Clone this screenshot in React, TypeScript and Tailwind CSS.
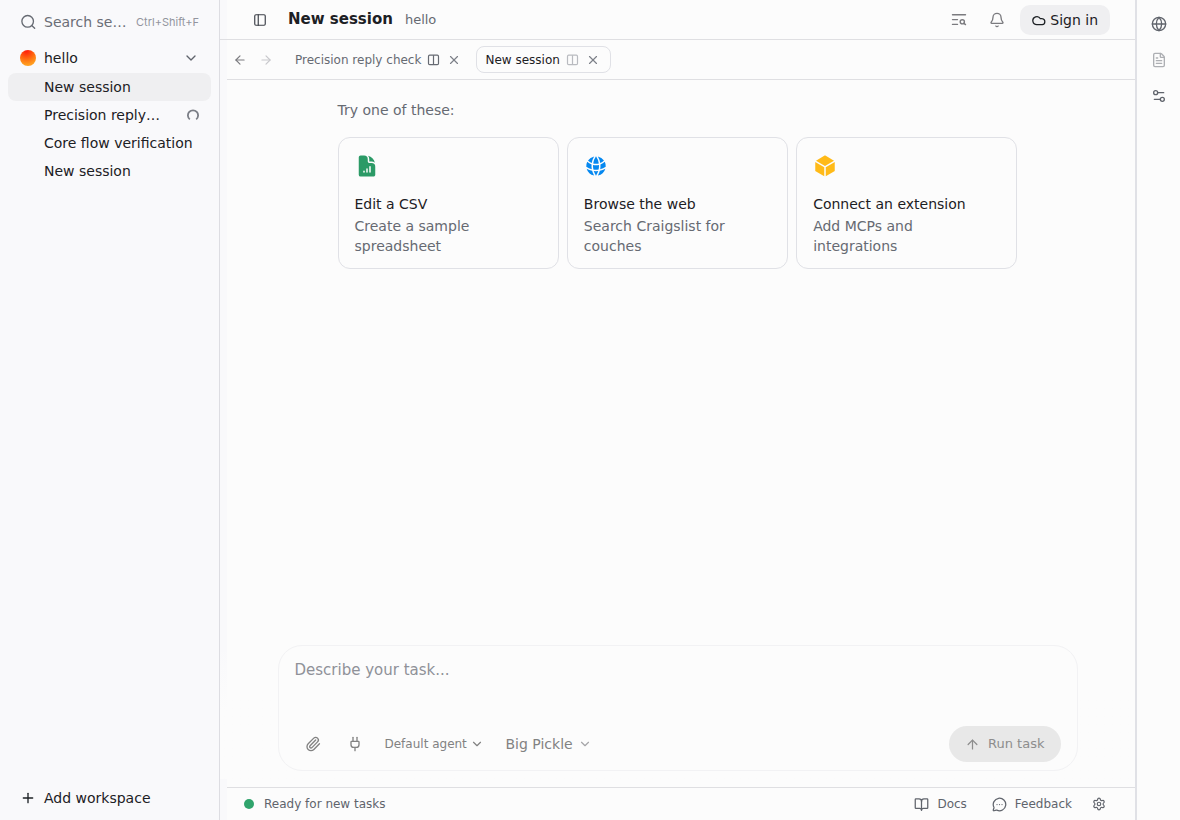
import React from 'react';
import {
  ArrowLeft,
  ArrowRight,
  ArrowUp,
  Bell,
  BookOpen,
  ChevronDown,
  FileText,
  Globe,
  MessageCircleMore,
  PanelLeft,
  Paperclip,
  Plug,
  Plus,
  Settings,
  Settings2,
  X,
} from 'lucide-react';
import { HiCube, HiDocumentChartBar, HiGlobeAlt } from 'react-icons/hi2';

interface Session {
  id: number;
  title: string;
  isActive?: boolean;
  isRunning?: boolean;
}

const sessions: Session[] = [
  { id: 1, title: 'New session', isActive: true },
  { id: 2, title: 'Precision reply check', isRunning: true },
  { id: 3, title: 'Core flow verification' },
  { id: 4, title: 'New session' },
];

const suggestions = [
  {
    title: 'Edit a CSV',
    description: 'Create a sample spreadsheet',
    icon: <HiDocumentChartBar size={24} className="text-[#2b9a66]" />,
  },
  {
    title: 'Browse the web',
    description: 'Search Craigslist for couches',
    icon: <HiGlobeAlt size={24} className="text-[#0588f0]" />,
  },
  {
    title: 'Connect an extension',
    description: 'Add MCPs and integrations',
    icon: <HiCube size={24} className="text-[#ffba18]" />,
  },
];

const SearchIcon: React.FC = () => (
  <svg
    viewBox="0 0 24 24"
    fill="none"
    stroke="currentColor"
    strokeWidth="2"
    strokeLinecap="round"
    className="size-4 shrink-0"
  >
    <circle cx="11.5" cy="11" r="8.7" />
    <path d="m18 17.5 4 4" />
  </svg>
);

const TextSearchIcon: React.FC = () => (
  <svg
    viewBox="0 0 16 16"
    fill="none"
    stroke="currentColor"
    strokeWidth="1.4"
    strokeLinecap="round"
    className="size-4"
  >
    <path d="M1.5 2.8h13M1.5 7.6h5M1.5 12.4h5" />
    <circle cx="11.3" cy="9.8" r="2.1" />
    <path d="m13 11.4 1.5 1.2" />
  </svg>
);

const CloudIcon: React.FC = () => (
  <svg
    viewBox="0 0 24 24"
    fill="none"
    stroke="currentColor"
    strokeWidth="2.2"
    strokeLinejoin="round"
    className="size-3.5"
  >
    <path d="M17.5 20H8.5a6.9 6.9 0 1 1 5.9-10.2c.9-.3 2-.3 3.1-.1a5.2 5.2 0 0 1 0 10.3Z" />
  </svg>
);

const SplitIcon: React.FC = () => (
  <svg
    viewBox="0 0 14 14"
    fill="none"
    stroke="currentColor"
    strokeWidth="1.2"
    className="size-3.5"
  >
    <rect x="2.5" y="2.2" width="10" height="9.4" rx="1.2" />
    <path d="M7.5 2.2v9.4" />
  </svg>
);

const Spinner: React.FC = () => (
  <svg
    viewBox="0 0 12 12"
    fill="none"
    stroke="currentColor"
    strokeWidth="1.8"
    className="size-3 shrink-0 text-[#7b7e86]"
  >
    <path d="M2.8 10.4a5.1 5.1 0 1 1 6.4 0" />
  </svg>
);

const Sidebar: React.FC = () => (
  <aside className="flex w-[220px] shrink-0 flex-col border-r border-[#dddde2] bg-[#f9f9fb] px-2 pt-2">
    <label className="flex h-7 items-center gap-2 px-3 text-[#666a72]">
      <SearchIcon />
      <input
        type="text"
        aria-label="Search sessions"
        placeholder="Search sessions"
        className="min-w-0 flex-1 bg-transparent text-sm text-ellipsis outline-none placeholder:text-[#6b6e76]"
      />
      <kbd className="font-[Inter,sans-serif] text-[11px] text-[#93959e]">
        Ctrl+Shift+F
      </kbd>
    </label>
    <button
      type="button"
      className="mt-2 flex h-7 items-center gap-2 px-3 text-sm"
    >
      <span className="size-4 rounded-full bg-[radial-gradient(circle_at_40%_5%,#ff1a0a,#ff6a10_45%,#ff9a1e_75%,#ffac2e)]" />
      <span className="flex-1 text-left">hello</span>
      <ChevronDown size={16} className="text-[#60646c]" />
    </button>
    <nav className="mt-px flex flex-col">
      {sessions.map(session => (
        <button
          key={session.id}
          type="button"
          className={
            session.isActive
              ? 'flex h-7 items-center gap-6 rounded-lg bg-[#efeff1] pr-3 pl-9 text-left text-sm'
              : 'flex h-7 items-center gap-6 rounded-lg pr-3 pl-9 text-left text-sm'
          }
        >
          <span className="min-w-0 flex-1 truncate">{session.title}</span>
          {session.isRunning && <Spinner />}
        </button>
      ))}
    </nav>
    <button
      type="button"
      className="mt-auto mb-2 flex h-7 items-center gap-2 px-3 text-sm"
    >
      <Plus size={16} />
      Add workspace
    </button>
  </aside>
);

const Header: React.FC = () => (
  <header className="relative z-10 flex h-10 shrink-0 items-center border-b border-[#dfdfe2] pr-[25px] pl-6">
    <button
      type="button"
      aria-label="Toggle sidebar"
      className="flex size-8 items-center justify-center text-[#3c4048]"
    >
      <PanelLeft size={14} />
    </button>
    <h1 className="ml-3 text-[15px] font-bold">New session</h1>
    <span className="ml-3 text-[13px] text-[#666a72]">hello</span>
    <div className="ml-auto flex items-center gap-2">
      <button
        type="button"
        aria-label="Search in session"
        className="flex size-[30px] items-center justify-center text-[#7b7b7f]"
      >
        <TextSearchIcon />
      </button>
      <button
        type="button"
        aria-label="Notifications"
        className="flex size-[30px] items-center justify-center text-[#7b7b7f]"
      >
        <Bell size={16} />
      </button>
      <button
        type="button"
        className="flex h-[30px] items-center gap-1 rounded-[10px] bg-[#efeff1] px-3 text-sm"
      >
        <CloudIcon />
        Sign in
      </button>
    </div>
  </header>
);

const TabBar: React.FC = () => (
  <div className="flex h-10 shrink-0 items-center border-b border-[#dfdfe2] pl-2 text-xs">
    <button
      type="button"
      aria-label="Back"
      className="flex size-6 items-center justify-center text-[#7b7b7f]"
    >
      <ArrowLeft size={14} />
    </button>
    <button
      type="button"
      aria-label="Forward"
      disabled
      className="ml-0.5 flex size-6 items-center justify-center text-[#c8c8cc]"
    >
      <ArrowRight size={14} />
    </button>
    <div className="ml-2 flex h-[27px] items-center gap-1 border border-transparent px-2 text-[#666a72]">
      <button type="button">Precision reply check</button>
      <button
        type="button"
        aria-label="Split Precision reply check"
        className="flex size-4 items-center justify-center"
      >
        <SplitIcon />
      </button>
      <button
        type="button"
        aria-label="Close Precision reply check"
        className="flex size-[18px] items-center justify-center text-[#7d8088]"
      >
        <X size={14} />
      </button>
    </div>
    <div className="ml-1 flex h-[27px] items-center gap-1 rounded-lg border border-[#e0e1e6] px-2">
      <button type="button">New session</button>
      <button
        type="button"
        aria-label="Split New session"
        className="flex size-4 items-center justify-center text-[#b9bbc0]"
      >
        <SplitIcon />
      </button>
      <button
        type="button"
        aria-label="Close New session"
        className="flex size-[18px] items-center justify-center text-[#7d8088]"
      >
        <X size={14} />
      </button>
    </div>
  </div>
);

const Suggestions: React.FC = () => (
  <section className="mx-auto w-full max-w-[680px] pt-5 text-sm">
    <p className="text-[#666a72]">Try one of these:</p>
    <div className="mt-[17px] grid grid-cols-3 gap-2">
      {suggestions.map(suggestion => (
        <button
          key={suggestion.title}
          type="button"
          className="flex flex-col items-start rounded-xl border border-[#e0e1e6] px-4 pt-4 pb-3 text-left"
        >
          {suggestion.icon}
          <span className="mt-4">{suggestion.title}</span>
          <span className="mt-0.5 text-[#666a72]">
            {suggestion.description}
          </span>
        </button>
      ))}
    </div>
  </section>
);

const Composer: React.FC = () => (
  <div className="relative z-10 mb-2 bg-linear-to-b from-transparent to-[#fcfcfc] to-50% px-4 pb-2">
    <form className="mx-auto flex w-full max-w-[800px] flex-col rounded-3xl border border-[#f2f2f4] bg-[#fcfcfc] px-4 pb-2">
      <textarea
        aria-label="Describe your task"
        placeholder="Describe your task..."
        className="h-20 resize-none bg-transparent pt-3 text-[15px] leading-6 outline-none placeholder:text-[#8f9198]"
      />
      <div className="flex items-center text-[#828282]">
        <button
          type="button"
          aria-label="Attach file"
          className="flex size-9 items-center justify-center"
        >
          <Paperclip size={16} />
        </button>
        <button
          type="button"
          aria-label="Connect tools"
          className="ml-1.5 flex size-9 items-center justify-center"
        >
          <Plug size={16} />
        </button>
        <label className="ml-3 flex items-center gap-0.5 text-xs">
          <select aria-label="Agent" className="appearance-none bg-transparent">
            <option>Default agent</option>
          </select>
          <ChevronDown size={14} />
        </label>
        <label className="ml-[22px] flex items-center gap-1 text-sm">
          <select aria-label="Model" className="appearance-none bg-transparent">
            <option>Big Pickle</option>
          </select>
          <ChevronDown size={14} className="text-[#a5a5a8]" />
        </label>
        <button
          type="submit"
          disabled
          className="ml-auto flex h-9 items-center gap-2 rounded-full bg-[#e8e8e8] px-4 text-[13px] text-[#8d8d8d]"
        >
          <ArrowUp size={15} />
          Run task
        </button>
      </div>
    </form>
  </div>
);

const StatusBar: React.FC = () => (
  <footer className="flex h-[33px] shrink-0 items-center border-t border-[#dfdfe2] pr-[22px] pl-6 text-xs text-[#60646c]">
    <span className="size-2.5 rounded-full bg-[#30a46c]" />
    <span className="ml-2.5">Ready for new tasks</span>
    <a href="#docs" className="ml-auto flex items-center gap-2">
      <BookOpen size={15} />
      Docs
    </a>
    <a href="#feedback" className="ml-[25px] flex items-center gap-2">
      <MessageCircleMore size={15} />
      Feedback
    </a>
    <button
      type="button"
      aria-label="Settings"
      className="ml-[13px] flex size-7 items-center justify-center"
    >
      <Settings size={14} />
    </button>
  </footer>
);

const ToolRail: React.FC = () => (
  <aside className="flex w-[45px] shrink-0 flex-col items-center gap-1 border-l-2 border-[#e0e1e6] pt-2 text-[#60646c]">
    <button
      type="button"
      aria-label="Browser"
      className="flex size-8 items-center justify-center"
    >
      <Globe size={16} />
    </button>
    <button
      type="button"
      aria-label="Files"
      disabled
      className="flex size-8 items-center justify-center opacity-50"
    >
      <FileText size={16} />
    </button>
    <button
      type="button"
      aria-label="Preferences"
      className="flex size-8 items-center justify-center"
    >
      <Settings2 size={16} />
    </button>
  </aside>
);

const App: React.FC = () => {
  return (
    <div className="flex min-h-screen bg-[#fcfcfc] font-['DejaVu_Sans',sans-serif] text-[#1c2024]">
      <Sidebar />
      <main className="relative flex min-w-0 flex-1 flex-col">
        {/* Resize handle, laid over the edge of the main column */}
        <div className="absolute inset-y-0 left-0 w-[7px] cursor-col-resize bg-[#f9f9fb]" />
        <Header />
        <TabBar />
        <div className="flex-1 px-4">
          <Suggestions />
        </div>
        <Composer />
        <StatusBar />
      </main>
      <ToolRail />
    </div>
  );
};

export default App;
